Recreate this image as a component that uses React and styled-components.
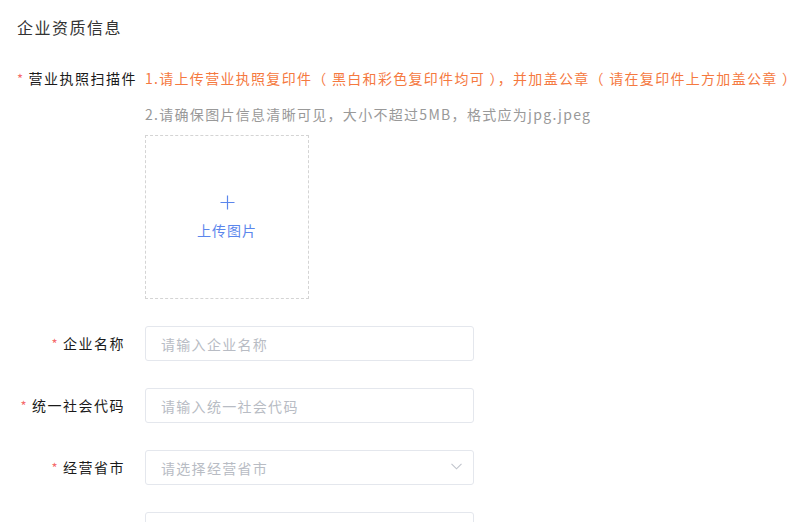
import React from 'react';
import styled, { createGlobalStyle } from 'styled-components';

const GlobalStyle = createGlobalStyle`
  html, body {
    margin: 0;
    padding: 0;
    background: #fff;
    overflow: hidden;
  }
  body {
    font-family: "Noto Sans CJK SC", "Noto Sans", sans-serif;
    color: #333;
  }
`;

const Page = styled.div`
  padding: 17px 0 0 17px;
  width: 791px;
  height: 522px;
  box-sizing: border-box;
`;

const Title = styled.h3`
  margin: 0 0 23px 0;
  font-size: 16px;
  line-height: 20px;
  font-weight: normal;
  letter-spacing: 1.5px;
  color: #333;
`;

const Row = styled.div`
  display: flex;
  align-items: ${props => props.top ? 'flex-start' : 'center'};
  margin-bottom: 27px;
`;

const Label = styled.label`
  flex: 0 0 128px;
  width: 128px;
  box-sizing: border-box;
  padding-right: 20px;
  text-align: right;
  white-space: nowrap;
  font-size: 14px;
  letter-spacing: 1.5px;
  color: #1a1a1a;
  line-height: ${props => props.top ? '36px' : '35px'};
`;

const Star = styled.span`
  color: #f56c6c;
  margin-right: 4px;
  font-size: 13px;
`;

const Content = styled.div`
  display: flex;
  flex-direction: column;
  min-width: 0;
`;

const Tip = styled.p`
  margin: 0;
  white-space: nowrap;
  font-size: 14px;
  letter-spacing: 1.3px;
  line-height: 36px;
  color: ${props => props.warn ? '#f5793f' : '#999'};
`;

const Upload = styled.div`
  margin-top: 3px;
  width: 164px;
  height: 164px;
  box-sizing: border-box;
  border: 1px dashed #d4d4d4;
  display: flex;
  flex-direction: column;
  align-items: center;
  justify-content: center;
  gap: 10px;
  color: #5b86ec;
  cursor: pointer;
`;

const UploadText = styled.span`
  font-size: 14px;
  letter-spacing: 1px;
  line-height: 20px;
`;

const Field = styled.div`
  position: relative;
  width: 329px;
  height: 35px;
`;

const Input = styled.input`
  width: 100%;
  height: 100%;
  box-sizing: border-box;
  border: 1px solid #e4e7ed;
  border-radius: 3px;
  padding: 0 30px 0 15px;
  font-family: inherit;
  font-size: 14px;
  letter-spacing: 1.3px;
  color: #333;
  outline: none;
  &::placeholder {
    color: #b8bcc4;
  }
`;

const Arrow = styled.svg`
  position: absolute;
  right: 12px;
  top: 13px;
`;

const PlusIcon = () => (
  <svg width="15" height="15" viewBox="0 0 15 15">
    <path d="M7.5 0.5v14M0.5 7.5h14" stroke="#5b86ec" strokeWidth="1.2" fill="none" />
  </svg>
);

const FormItem = ({ label, placeholder, select }) => (
  <Row>
    <Label>{label && <Star>*</Star>}{label}</Label>
    <Field>
      <Input placeholder={placeholder} readOnly={select} />
      {select && (
        <Arrow width="11" height="7" viewBox="0 0 11 7">
          <path d="M0.5 0.8l5 5 5-5" stroke="#c0c4cc" strokeWidth="1.1" fill="none" />
        </Arrow>
      )}
    </Field>
  </Row>
);

const App = () => (
  <Page>
    <GlobalStyle />
    <Title>企业资质信息</Title>
    <Row top>
      <Label top><Star>*</Star>营业执照扫描件</Label>
      <Content>
        <Tip warn>1.请上传营业执照复印件（ 黑白和彩色复印件均可 ），并加盖公章（ 请在复印件上方加盖公章 ），</Tip>
        <Tip>2.请确保图片信息清晰可见，大小不超过5MB，格式应为jpg.jpeg</Tip>
        <Upload>
          <PlusIcon />
          <UploadText>上传图片</UploadText>
        </Upload>
      </Content>
    </Row>
    <FormItem label="企业名称" placeholder="请输入企业名称" />
    <FormItem label="统一社会代码" placeholder="请输入统一社会代码" />
    <FormItem label="经营省市" placeholder="请选择经营省市" select />
    <FormItem label="" placeholder="" />
  </Page>
);

export default App;
